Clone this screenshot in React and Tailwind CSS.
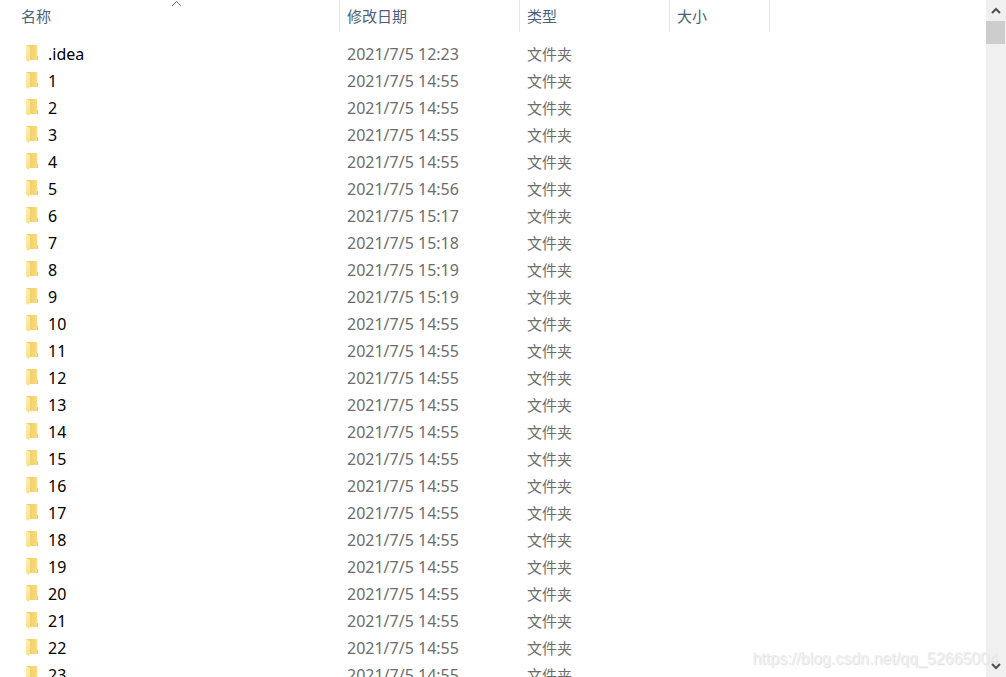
import React, { useState } from 'react';

const folders = [
  { name: '.idea', date: '2021/7/5 12:23' },
  { name: '1', date: '2021/7/5 14:55' },
  { name: '2', date: '2021/7/5 14:55' },
  { name: '3', date: '2021/7/5 14:55' },
  { name: '4', date: '2021/7/5 14:55' },
  { name: '5', date: '2021/7/5 14:56' },
  { name: '6', date: '2021/7/5 15:17' },
  { name: '7', date: '2021/7/5 15:18' },
  { name: '8', date: '2021/7/5 15:19' },
  { name: '9', date: '2021/7/5 15:19' },
  { name: '10', date: '2021/7/5 14:55' },
  { name: '11', date: '2021/7/5 14:55' },
  { name: '12', date: '2021/7/5 14:55' },
  { name: '13', date: '2021/7/5 14:55' },
  { name: '14', date: '2021/7/5 14:55' },
  { name: '15', date: '2021/7/5 14:55' },
  { name: '16', date: '2021/7/5 14:55' },
  { name: '17', date: '2021/7/5 14:55' },
  { name: '18', date: '2021/7/5 14:55' },
  { name: '19', date: '2021/7/5 14:55' },
  { name: '20', date: '2021/7/5 14:55' },
  { name: '21', date: '2021/7/5 14:55' },
  { name: '22', date: '2021/7/5 14:55' },
  { name: '23', date: '2021/7/5 14:55' },
];

const FolderIcon = () => (
  <svg width="13" height="19" viewBox="0 0 13 19" aria-hidden="true">
    <defs>
      <linearGradient id="folderBack" x1="0" y1="0" x2="1" y2="0">
        <stop offset="0" stopColor="#efc964" />
        <stop offset="1" stopColor="#fcdc80" />
      </linearGradient>
      <linearGradient id="folderFront" x1="0" y1="0" x2="0" y2="1">
        <stop offset="0" stopColor="#ffeeb0" />
        <stop offset="1" stopColor="#fce08a" />
      </linearGradient>
    </defs>
    <path d="M0 0H11V11H12V15H3Z" fill="url(#folderBack)" />
    <path d="M11 11h1v4h-1z" fill="#efc76a" />
    <path d="M0 0L4 2V14.500L3 17L0 15Z" fill="url(#folderFront)" />
  </svg>
);

const ColumnHeader = ({ label, onClick, className, children }) => (
  <th scope="col" className={`relative h-8 border-r border-[#e5e5e5] p-0 text-left font-normal ${className}`}>
    <button type="button" onClick={onClick} className="flex h-8 w-full items-center text-[15px] text-[#4c607a]">
      {label}
    </button>
    {children}
  </th>
);

const ScrollBar = () => (
  <div className="flex w-5 shrink-0 flex-col bg-[#f0f0f0]">
    <button type="button" aria-label="向上滚动" className="flex h-[21px] items-center justify-center">
      <svg width="10" height="7" viewBox="0 0 10 7" fill="none" stroke="#505050" strokeWidth="2">
        <path d="M1 6L5 2L9 6" />
      </svg>
    </button>
    <div className="mr-px h-[23px] bg-[#cdcdcd]" />
    <div className="flex-1" />
    <button type="button" aria-label="向下滚动" className="flex h-[21px] items-center justify-center">
      <svg width="10" height="7" viewBox="0 0 10 7" fill="none" stroke="#505050" strokeWidth="2">
        <path d="M1 1L5 5L9 1" />
      </svg>
    </button>
  </div>
);

const App = () => {
  const [ascending, setAscending] = useState(true);
  const rows = ascending ? folders : [...folders].reverse();

  return (
    <div className="relative flex h-screen overflow-hidden bg-white font-['Noto_Sans','Noto_Sans_CJK_SC',sans-serif]">
      <div className="min-w-0 flex-1 overflow-hidden">
        <table className="w-full table-fixed border-separate border-spacing-0">
          <colgroup>
            <col className="w-[340px]" />
            <col className="w-[180px]" />
            <col className="w-[150px]" />
            <col className="w-[100px]" />
            <col />
          </colgroup>
          <thead>
            <tr>
              <ColumnHeader label="名称" className="pl-[21px]" onClick={() => setAscending(!ascending)}>
                <svg
                  className={`absolute left-[171px] top-0 ${ascending ? '' : 'rotate-180'}`}
                  width="11"
                  height="7"
                  viewBox="0 0 11 7"
                  fill="none"
                  stroke="#6d6d6d"
                >
                  <path d="M1 6L5.500 1.500L10 6" />
                </svg>
              </ColumnHeader>
              <ColumnHeader label="修改日期" className="pl-[7px]" />
              <ColumnHeader label="类型" className="pl-[7px]" />
              <ColumnHeader label="大小" className="pl-[7px]" />
              <td />
            </tr>
          </thead>
          <tbody className="before:block before:h-[9px]">
            {rows.map((folder) => (
              <tr key={folder.name} className="h-[27px] text-[15px] leading-[27px] text-[#6d6d6d]">
                <td className="p-0 pl-[26px]">
                  <div className="flex h-[27px] items-center gap-[9px] text-base leading-[27px] text-black">
                    <FolderIcon />
                    <span>{folder.name}</span>
                  </div>
                </td>
                <td className="p-0 pl-[7px] text-base leading-[27px]">{folder.date}</td>
                <td className="p-0 pl-[7px]">文件夹</td>
                <td />
                <td />
              </tr>
            ))}
          </tbody>
        </table>
      </div>
      <ScrollBar />
      <div className="pointer-events-none absolute bottom-[6px] right-2 font-['Liberation_Sans',sans-serif] text-base text-[#f0f0f0] [text-shadow:1px_1px_1px_#dedede]">
        https://blog.csdn.net/qq_52665004
      </div>
    </div>
  );
};

export default App;
